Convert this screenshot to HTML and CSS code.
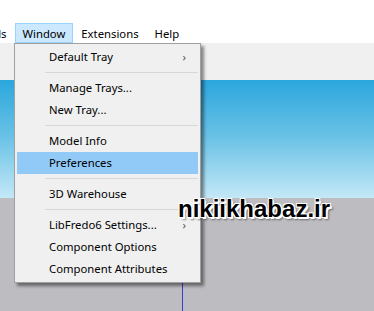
FILE: index.html
```html
<!DOCTYPE html>
<html lang="en">
<head>
    <meta charset="UTF-8">
    <meta name="viewport" content="width=device-width, initial-scale=1.0">
    <title>SketchUp - Window menu</title>
    <link rel="stylesheet" href="styles.css">
</head>
<body>
    <div class="app">
        <div class="titlebar"></div>
        <nav class="menubar">
            <span class="menu-item tools">Tools</span>
            <span class="menu-item open">Window</span>
            <span class="menu-item">Extensions</span>
            <span class="menu-item">Help</span>
        </nav>
        <div class="toolbar"></div>
        <div class="viewport">
            <div class="sky"></div>
            <div class="ground"></div>
            <div class="axis"></div>
        </div>

        <!-- Window dropdown -->
        <ul class="dropdown">
            <li class="entry has-sub">Default Tray</li>
            <li class="sep"></li>
            <li class="entry">Manage Trays...</li>
            <li class="entry">New Tray...</li>
            <li class="sep"></li>
            <li class="entry">Model Info</li>
            <li class="entry active">Preferences</li>
            <li class="sep"></li>
            <li class="entry">3D Warehouse</li>
            <li class="sep"></li>
            <li class="entry has-sub">LibFredo6 Settings...</li>
            <li class="entry">Component Options</li>
            <li class="entry">Component Attributes</li>
        </ul>

        <div class="watermark">nikiikhabaz.ir</div>
    </div>
</body>
</html>
```

FILE: styles.css
```css
body {
    margin: 0;
    padding: 0;
    font-family: "Noto Sans", Arial, sans-serif;
    font-size: 11.3px;
    color: #000;
    background-color: #fff;
}

.app {
    position: relative;
    width: 374px;
    height: 311px;
    overflow: hidden;
}

.titlebar {
    height: 23px;
    background-color: #fff;
}

.menubar {
    display: flex;
    height: 20px;
    background-color: #fff;
    margin-left: -29px;
}

.menu-item {
    box-sizing: border-box;
    height: 20px;
    line-height: 19px;
    padding: 0 7px;
    border: 1px solid transparent;
}

.menu-item.open {
    background-color: #cce8ff;
    border-color: #99d1ff;
}

.toolbar {
    height: 37px;
    background-color: #f0f0f0;
}

.viewport {
    position: relative;
    height: 231px;
}

.sky {
    height: 118px;
    background: linear-gradient(to bottom, #2ba7dd 0%, #6cc3e6 50%, #c4e8f7 100%);
}

.ground {
    height: 113px;
    background-color: #bcbcc1;
}

.axis {
    position: absolute;
    left: 182px;
    top: 190px;
    width: 1px;
    height: 41px;
    background-color: #3b3bd0;
}

.dropdown {
    position: absolute;
    left: 14px;
    top: 43px;
    width: 181px;
    margin: 0;
    padding: 2px;
    list-style: none;
    background-color: #f0f0f0;
    border: 1px solid #a0a0a0;
    box-shadow: 3px 3px 3px rgba(0, 0, 0, 0.45);
}

.entry {
    position: relative;
    height: 22px;
    line-height: 22px;
    padding-left: 32px;
    white-space: nowrap;
}

.entry.active {
    background-color: #91c9f7;
}

.entry.has-sub::after {
    content: "\203A";
    position: absolute;
    right: 12px;
    top: 0;
    color: #555;
}

.sep {
    height: 1px;
    margin: 4px 0 4px 28px;
    background-color: #d7d7d7;
}

.watermark {
    position: absolute;
    left: 178px;
    top: 195px;
    font-family: "Liberation Sans", Arial, sans-serif;
    font-weight: bold;
    font-size: 24px;
    color: #000;
    text-shadow:
        -1px -1px 0 #fff, 1px -1px 0 #fff, -1px 1px 0 #fff, 1px 1px 0 #fff,
        2px 2px 0 #fff, 3px 3px 2px rgba(0, 0, 0, 0.45);
}
```
